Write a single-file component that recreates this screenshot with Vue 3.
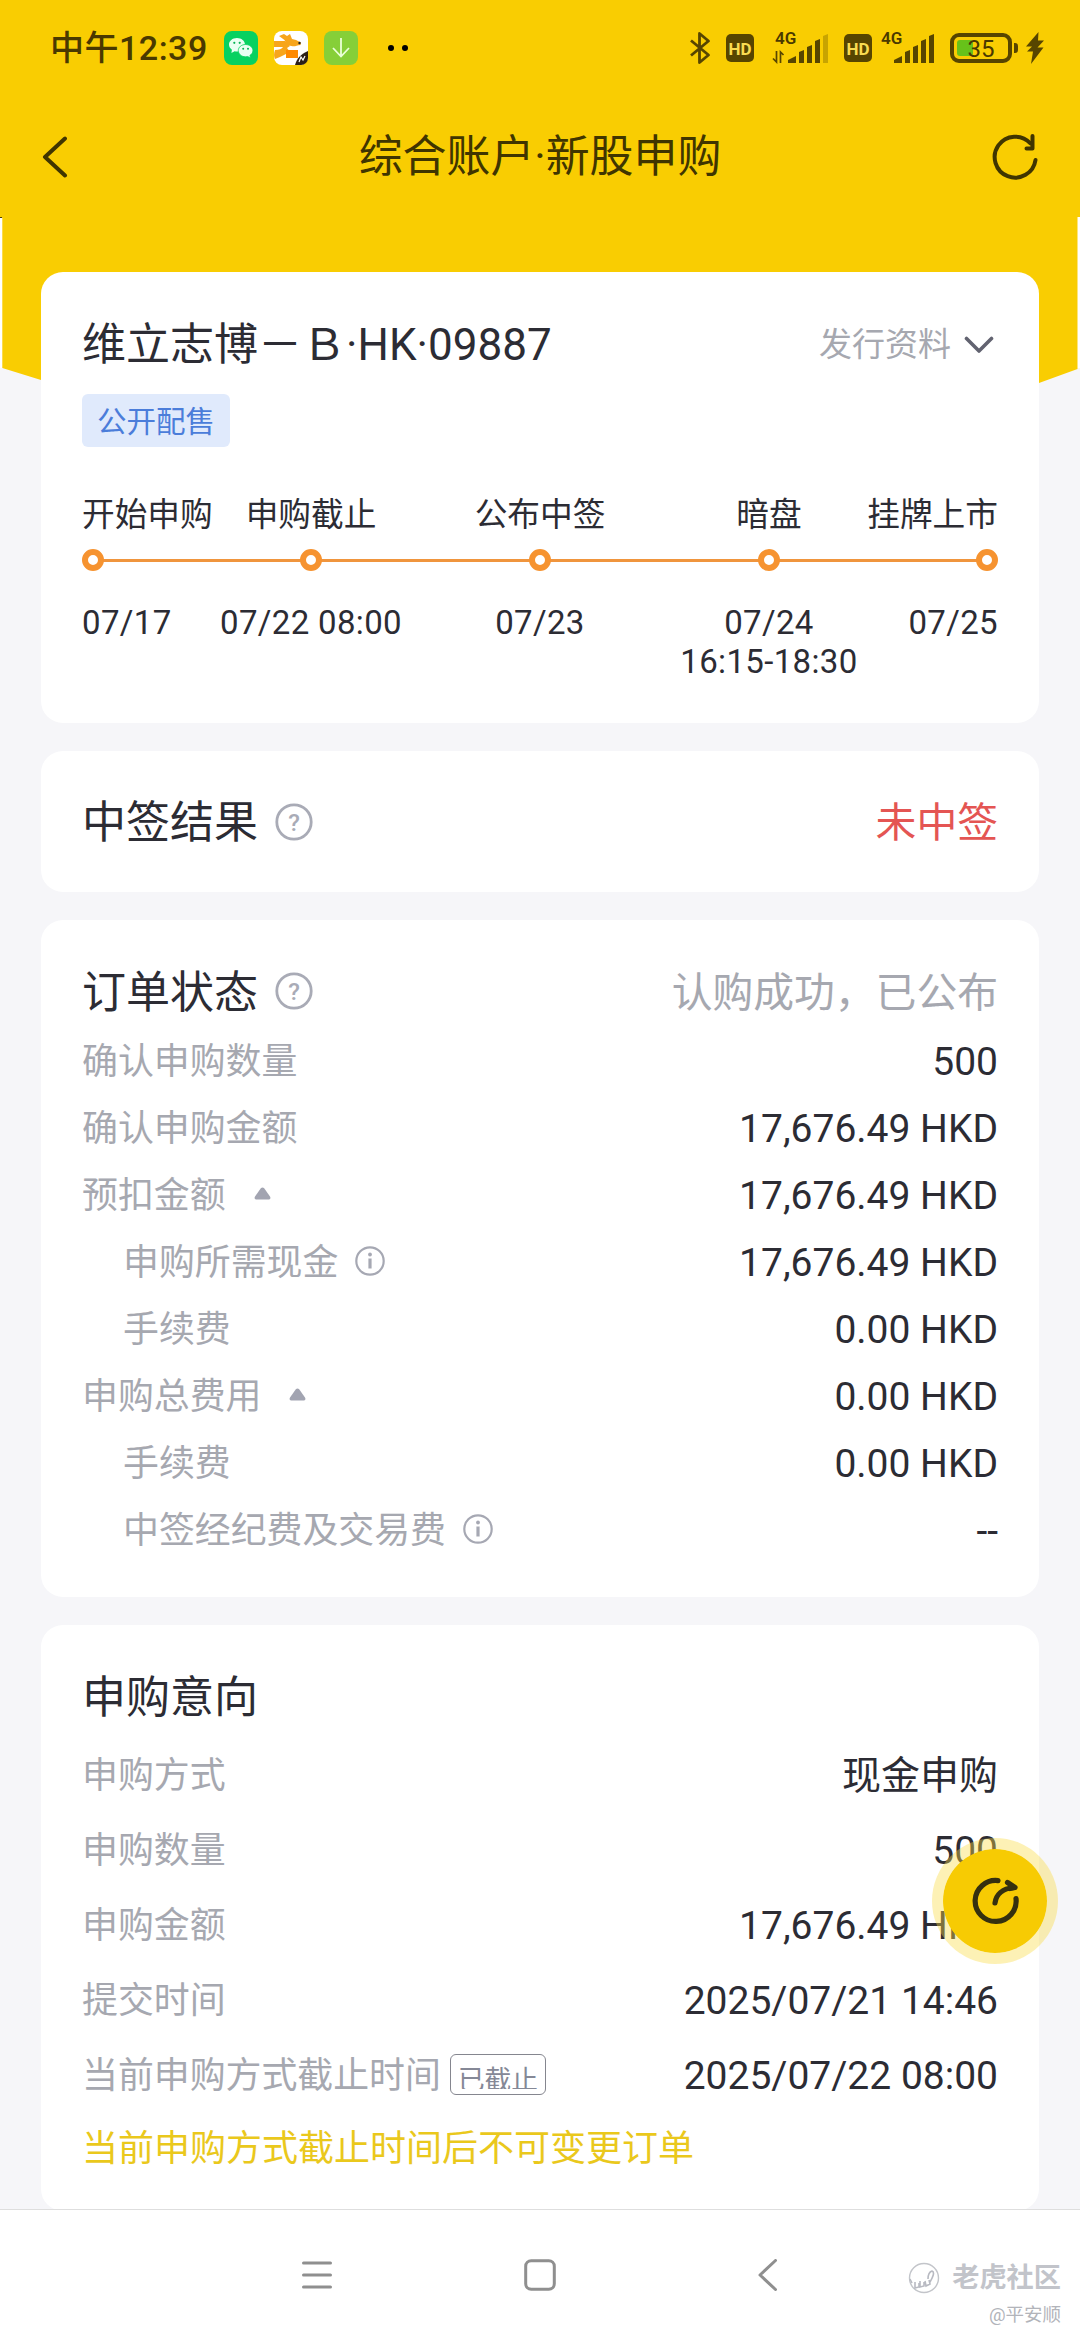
<template>
    <div class="page">
        <svg class="header-bg" width="1080" height="400" viewBox="0 0 1080 400">
            <rect x="0" y="216" width="1080" height="152" fill="#fff" />
            <path d="M0 0H1080V217H1077.500V369L1039 383L900 400H120L41 380L2.300 368V218H0z" fill="#f9cd02" />
            <rect x="0" y="217" width="2" height="1" fill="#4a3d00" />
        </svg>

        <div class="status-bar">
            <span class="time">中午12:39</span>
            <svg class="app-icon" viewBox="0 0 34 34">
                <rect width="34" height="34" rx="8" fill="#07d160" />
                <path d="M13 7c-4.600 0-8 2.900-8 6.600 0 2.100 1.100 3.900 2.900 5.100L7.400 22l3.200-1.700c.8.200 1.600.3 2.400.3 4.400 0 8-3 8-6.900S17.400 7 13 7z" fill="#e9fff2" />
                <path d="M21.500 13.500c-4 0-7.200 2.700-7.200 6.100s3.200 6.200 7.200 6.200c.8 0 1.500-.1 2.200-.3l2.800 1.500-.6-2.600c1.900-1.100 3-2.800 3-4.800 0-3.400-3.300-6.100-7.400-6.100z" fill="#e9fff2" stroke="#07d160" stroke-width=".8" />
                <g fill="#07b455">
                    <circle cx="10.300" cy="11.800" r="1.100" />
                    <circle cx="15.700" cy="11.800" r="1.100" />
                    <circle cx="19.200" cy="17.800" r="1" />
                    <circle cx="24" cy="17.800" r="1" />
                </g>
            </svg>
            <svg class="app-icon" viewBox="0 0 34 34">
                <rect width="34" height="34" rx="8" fill="#fff" />
                <path d="M5 5l5-2 3 2 3-2 2 5 4 1 5 2.500-.5 2.500c-4 .5-6 2-9 1-4-.5-5-2-7-6z" fill="#f7a51b" />
                <path d="M0 10h11l5 5-3 2 3 4-10 5-5 2c-1.500-3-1-6 0-9 4 0 7-1 8-3H0z" fill="#f7a51b" />
                <path d="M12 19h12v8H12z" fill="#ff8a00" />
                <circle cx="25.500" cy="12" r="1.200" fill="#222" />
                <path d="M34 20v7a7 7 0 0 1-7 7h-6c2-7 6-11 13-14z" fill="#2b1f18" />
                <path d="M25 31l2-5 2 3 2-4" stroke="#fff" stroke-width="1.200" fill="none" />
            </svg>
            <svg class="app-icon" viewBox="0 0 34 34">
                <rect width="34" height="34" rx="8" fill="#86cf38" />
                <path d="M17 7v18M9 17l8 8.500 8-8.500" stroke="#eaffd8" stroke-width="1.800" fill="none" />
            </svg>
            <div class="dots"><i></i><i></i></div>

            <div class="status-right">
                <svg class="bluetooth" width="22" height="34" viewBox="0 0 22 34">
                    <path d="M2 9.500L19.500 24 10.500 31.500V2.500L19.500 10 2 24.500" fill="none" stroke="#574500" stroke-width="2.800" stroke-linejoin="round" />
                </svg>
                <span class="hd">HD</span>
                <div v-for="(sim, i) in sims" :key="i" class="sim-wrap">
                    <div class="sim">
                        <span class="net">4G</span>
                        <svg width="58" height="32" viewBox="0 0 58 32">
                            <path v-if="sim.data" d="M5.500 19v11L2 26.500M9.500 31V20l3 3" fill="none" stroke="#574500" stroke-width="1.700" />
                            <g fill="#574500">
                                <path d="M17 31v-3l8-4v7z" />
                                <path d="M28 31V20l5-2v13z" />
                                <path d="M36 31V15l5-2v18z" />
                                <path d="M44 31V9l5-2v24z" />
                                <path d="M52 31V4l5-2v29z" :opacity="sim.full ? 1 : 0.3" />
                            </g>
                        </svg>
                    </div>
                    <span v-if="i === 0" class="hd">HD</span>
                </div>
                <div class="battery">
                    <div class="level"></div>
                    <span>35</span>
                </div>
                <div class="battery-tip"></div>
                <svg class="bolt" width="18" height="32" viewBox="0 0 18 32">
                    <path d="M12.500 0L0 14.500h6L1 19.500h6L5 32 17.500 15.500h-6L18 8.500h-6z" fill="#574500" />
                </svg>
            </div>
        </div>

        <div class="nav-bar">
            <svg width="26" height="42" viewBox="0 0 26 42">
                <path d="M23 2.500L3 21l20 18.500" fill="none" stroke="#403500" stroke-width="4" stroke-linecap="round" stroke-linejoin="round" />
            </svg>
            <h1>综合账户·新股申购</h1>
            <svg width="46" height="48" viewBox="0 0 46 48">
                <path d="M43.500 27A20.500 20.500 0 1 1 38.500 10.500" fill="none" stroke="#403500" stroke-width="4" stroke-linecap="round" />
                <path d="M40.500 3v12.500h-6" fill="none" stroke="#403500" stroke-width="4" stroke-linecap="round" stroke-linejoin="round" />
            </svg>
        </div>

        <section class="card stock">
            <div class="head">
                <h2>维立志博－Ｂ·HK·09887</h2>
                <div class="material">
                    发行资料
                    <svg width="30" height="18" viewBox="0 0 30 18">
                        <path d="M2.500 2.500L15 15 27.500 2.500" fill="none" stroke="#626370" stroke-width="3.600" stroke-linecap="round" stroke-linejoin="round" />
                    </svg>
                </div>
            </div>
            <span class="tag">公开配售</span>
            <div class="steps labels">
                <div v-for="s in steps" :key="s.label">{{ s.label }}</div>
            </div>
            <div class="steps points">
                <div v-for="s in steps" :key="s.label"><i></i></div>
            </div>
            <div class="steps dates">
                <div v-for="s in steps" :key="s.label">
                    <span>{{ s.date }}</span>
                    <span v-if="s.time">{{ s.time }}</span>
                </div>
            </div>
        </section>

        <section class="card result">
            <h2>中签结果</h2>
            <svg class="help" viewBox="0 0 38 38">
                <circle cx="19" cy="19" r="17.200" />
                <text x="19" y="27.500">?</text>
            </svg>
            <span class="status red">未中签</span>
        </section>

        <section class="card order">
            <div class="head">
                <h2>订单状态</h2>
                <svg class="help" viewBox="0 0 38 38">
                    <circle cx="19" cy="19" r="17.200" />
                    <text x="19" y="27.500">?</text>
                </svg>
                <span class="status">认购成功，已公布</span>
            </div>
            <div v-for="(row, i) in orderRows" :key="i" class="row" :class="{ sub: row.sub }">
                <span class="label">{{ row.label }}</span>
                <svg v-if="row.fold" class="fold" width="17" height="13" viewBox="0 0 17 13">
                    <path d="M7 1Q8.500-.2 10 1l6 8.500q1.200 2.500-1 3H2Q-.2 12 1 9.500z" fill="#a2a4b1" />
                </svg>
                <svg v-if="row.info" class="info" width="30" height="30" viewBox="0 0 30 30">
                    <circle cx="15" cy="15" r="13.700" fill="none" stroke="#a6a8b3" stroke-width="2.200" />
                    <circle cx="15" cy="8.500" r="1.900" fill="#a6a8b3" />
                    <path d="M15 12.500v10" stroke="#a6a8b3" stroke-width="3.200" />
                </svg>
                <span class="value">{{ row.value }}</span>
            </div>
        </section>

        <section class="card intent">
            <div class="head"><h2>申购意向</h2></div>
            <div v-for="row in intentRows" :key="row.label" class="row">
                <span class="label">{{ row.label }}</span>
                <span v-if="row.badge" class="badge"><em>{{ row.badge }}</em></span>
                <span class="value">{{ row.value }}</span>
            </div>
            <p class="notice">当前申购方式截止时间后不可变更订单</p>
        </section>

        <div class="fab">
            <svg width="50" height="50" viewBox="0 0 50 50">
                <g fill="none" stroke="#35300f" stroke-width="5.200" stroke-linecap="round" stroke-linejoin="round">
                    <path d="M28 4.600A20.500 20.500 0 1 0 46 22.500" />
                    <path d="M25 27c1-8 7-14.500 19-15.500" />
                    <path d="M37.500 6.500l7.500 5-5 1" />
                </g>
            </svg>
        </div>

        <div class="bottom-nav">
            <svg class="menu" width="32" height="32" viewBox="0 0 32 32">
                <path d="M2.500 4h27M2.500 16h27M2.500 28h27" />
            </svg>
            <svg width="32" height="32" viewBox="0 0 32 32">
                <rect x="1.700" y="1.700" width="28.600" height="28.600" rx="5.500" />
            </svg>
            <svg width="32" height="32" viewBox="0 0 32 32">
                <path d="M23.500 1.500L8 16 23.500 30.500" />
            </svg>
        </div>

        <div class="watermark">
            <div class="brand">
                <svg width="32" height="32" viewBox="0 0 32 32">
                    <circle cx="16" cy="16" r="14.500" fill="none" stroke="#c3c5ca" stroke-width="1.400" />
                    <path d="M2 17l2 4M7 20v6l4-1v-4M12 19v6l4-1v-4M17 19l1 5 4-2-1-4M20 17c0-3 1-7 4-8 3 1 1 6-2 11" fill="none" stroke="#b8bac2" stroke-width="1.600" />
                </svg>
                <b>老虎社区</b>
            </div>
            <span>@平安顺</span>
        </div>
    </div>
</template>

<script setup>
const sims = [
    { data: true, full: false },
    { data: false, full: true },
]

const steps = [
    { label: '开始申购', date: '07/17' },
    { label: '申购截止', date: '07/22 08:00' },
    { label: '公布中签', date: '07/23' },
    { label: '暗盘', date: '07/24', time: '16:15-18:30' },
    { label: '挂牌上市', date: '07/25' },
]

const orderRows = [
    { label: '确认申购数量', value: '500' },
    { label: '确认申购金额', value: '17,676.49 HKD' },
    { label: '预扣金额', value: '17,676.49 HKD', fold: true },
    { label: '申购所需现金', value: '17,676.49 HKD', sub: true, info: true },
    { label: '手续费', value: '0.00 HKD', sub: true },
    { label: '申购总费用', value: '0.00 HKD', fold: true },
    { label: '手续费', value: '0.00 HKD', sub: true },
    { label: '中签经纪费及交易费', value: '--', sub: true, info: true },
]

const intentRows = [
    { label: '申购方式', value: '现金申购' },
    { label: '申购数量', value: '500' },
    { label: '申购金额', value: '17,676.49 HKD' },
    { label: '提交时间', value: '2025/07/21 14:46' },
    { label: '当前申购方式截止时间', value: '2025/07/22 08:00', badge: '已截止' },
]
</script>

<style>
body {
    margin: 0;
    background: #f6f6f9;
}
</style>

<style scoped>
.page {
    position: relative;
    display: flex;
    flex-direction: column;
    width: 1080px;
    height: 2340px;
    overflow: hidden;
    background: #f6f6f9;
    color: #2c2c34;
    font-family: Roboto, "Noto Sans CJK SC", sans-serif;
    isolation: isolate;
}

.header-bg {
    position: absolute;
    top: 0;
    left: 0;
    z-index: -1;
}

h1,
h2,
p {
    margin: 0;
    font-weight: 400;
}

.status-bar {
    display: flex;
    align-items: center;
    height: 96px;
    padding: 0 36px 0 50px;
    box-sizing: border-box;
    color: #4a3900;
}

.time {
    width: 174px;
    font-size: 34px;
    font-weight: 500;
    letter-spacing: 0.500px;
    line-height: 40px;
    white-space: nowrap;
}

.app-icon {
    width: 34px;
    height: 34px;
    margin-right: 16px;
}

.dots {
    display: flex;
    gap: 8px;
    margin-left: 14px;
}

.dots i {
    width: 6px;
    height: 6px;
    border-radius: 50%;
    background: #000;
}

.status-right {
    display: flex;
    align-items: center;
    margin-left: auto;
}

.bluetooth {
    margin-right: 15px;
}

.hd {
    width: 28px;
    height: 28px;
    border-radius: 5px;
    background: #574500;
    color: #f9dc50;
    font-size: 17px;
    font-weight: 700;
    line-height: 30px;
    text-align: center;
}

.sim-wrap {
    display: flex;
    align-items: center;
}

.sim {
    position: relative;
    display: flex;
    width: 58px;
    height: 32px;
    margin: 0 15px 0 17px;
}

.sim-wrap + .sim-wrap .sim {
    margin: 0 15px 0 5px;
}

.net {
    position: absolute;
    top: -2px;
    left: 4px;
    font-size: 17px;
    font-weight: 600;
    line-height: 16px;
}

.battery {
    position: relative;
    width: 62px;
    height: 30px;
    border: 4px solid #574500;
    border-radius: 9px;
    box-sizing: border-box;
    font-size: 24px;
    line-height: 24px;
    text-align: center;
}

.battery span {
    position: relative;
}

.level {
    position: absolute;
    top: 3px;
    left: 3px;
    width: 16px;
    height: 16px;
    border-radius: 3px;
    background: #67c21a;
}

.battery-tip {
    width: 4px;
    height: 10px;
    margin: 0 8px 0 2px;
    border-radius: 0 3px 3px 0;
    background: #574500;
}

.nav-bar {
    display: flex;
    align-items: center;
    justify-content: space-between;
    height: 122px;
    padding: 0 42px;
    color: #403500;
}

.nav-bar h1 {
    padding-left: 20px;
    font-size: 43.900px;
    line-height: 60px;
}

.card {
    margin: 0 41px 28px;
    padding: 0 41px;
    box-sizing: border-box;
    border-radius: 22px;
    background: #fff;
    flex-shrink: 0;
}

.card h2 {
    font-size: 44px;
    line-height: 60px;
    white-space: nowrap;
}

.head {
    display: flex;
    align-items: center;
}

.stock {
    height: 451px;
    margin-top: 54px;
    padding-top: 40px;
}

.stock .head {
    justify-content: space-between;
    height: 66px;
}

.material {
    display: flex;
    align-items: center;
    gap: 13px;
    margin-right: 4px;
    color: #a6a8b0;
    font-size: 33px;
    line-height: 46px;
}

.tag {
    display: block;
    width: 148px;
    height: 53px;
    margin-top: 16px;
    border-radius: 6px;
    background: #e0eafc;
    color: #4b7dda;
    font-size: 29.500px;
    line-height: 56px;
    text-align: center;
}

.steps {
    display: grid;
    grid-template-columns: minmax(0, 1fr) repeat(3, minmax(0, 2fr)) minmax(0, 1fr);
    white-space: nowrap;
}

.steps div {
    display: flex;
    flex-direction: column;
    align-items: center;
}

.steps div:first-child {
    align-items: flex-start;
}

.steps div:last-child {
    align-items: flex-end;
}

.labels {
    margin-top: 43px;
    font-size: 32.700px;
    line-height: 50px;
}

/* labels are wider than the half-width edge columns */
.labels div:first-child {
    display: block;
}

.labels div:last-child {
    display: flex;
}

.points {
    height: 22px;
    margin-top: 9px;
    background: linear-gradient(#f0953d, #f0953d) center / 894px 3px no-repeat;
}

.points i {
    width: 22px;
    height: 22px;
    border: 6px solid #f69330;
    border-radius: 50%;
    box-sizing: border-box;
    background: #fff;
}

.dates {
    margin-top: 32px;
    font-size: 33px;
    letter-spacing: 0.350px;
    line-height: 39px;
}

.result {
    display: flex;
    align-items: center;
    height: 141px;
    padding-top: 3px;
}

.help {
    width: 38px;
    height: 38px;
    margin: -3px 0 0 17px;
}

.help circle {
    fill: none;
    stroke: #a9abb6;
    stroke-width: 2.800;
}

.help text {
    fill: #a9abb6;
    font-size: 24px;
    font-weight: 500;
    text-anchor: middle;
}

.status {
    margin-left: auto;
    color: #a6a8b0;
    font-size: 40.800px;
    line-height: 58px;
}

.red {
    color: #e45553;
}

.order {
    height: 677px;
    padding-top: 38px;
}

.order .head {
    height: 70px;
}

.order .help {
    margin-top: -5px;
}

.row {
    display: flex;
    align-items: center;
    height: 67px;
}

.sub {
    padding-left: 41px;
}

.label {
    color: #a6a8b0;
    font-size: 35.900px;
    line-height: 50px;
    white-space: nowrap;
}

.value {
    margin-left: auto;
    font-size: 39px;
    line-height: 54px;
    white-space: nowrap;
}

.fold {
    margin: -4px 0 0 28px;
}

.info {
    margin: -3px 0 0 17px;
}

.intent {
    height: 586px;
    margin-bottom: 0;
    padding-top: 33px;
}

.intent .head {
    height: 80px;
}

.intent .row {
    height: 75px;
}

.badge {
    height: 41px;
    margin: -3px 0 0 9px;
    padding: 0 7px;
    border: 1px solid #85868f;
    border-radius: 6px;
    box-sizing: border-box;
}

.badge em {
    display: block;
    height: 34px;
    overflow: hidden;
    color: #858896;
    font-size: 26.700px;
    font-style: normal;
    line-height: 51px;
}

.notice {
    color: #eac81c;
    font-size: 36px;
    line-height: 72px;
}

.fab {
    position: absolute;
    top: 1838px;
    left: 932px;
    display: flex;
    align-items: center;
    justify-content: center;
    width: 126px;
    height: 126px;
    border: 11px solid rgba(250, 220, 70, 0.4);
    border-radius: 50%;
    box-sizing: border-box;
    background: #f7cb03;
    background-clip: padding-box;
}

.bottom-nav {
    position: absolute;
    right: 0;
    bottom: 0;
    left: 0;
    display: flex;
    justify-content: center;
    gap: 196px;
    height: 131px;
    padding-top: 49px;
    border-top: 1px solid #dedede;
    box-sizing: border-box;
    background: #fff;
}

.bottom-nav svg {
    fill: none;
    stroke: #8f8f8f;
    stroke-width: 3;
    stroke-linecap: round;
    stroke-linejoin: round;
}

.bottom-nav .menu {
    margin: 0 -5px 0 5px;
}

.watermark {
    position: absolute;
    right: 19px;
    bottom: 13px;
    display: flex;
    flex-direction: column;
    align-items: flex-end;
    color: #b2b4ba;
}

.brand {
    display: flex;
    align-items: center;
    gap: 12px;
    font-size: 27.200px;
    line-height: 34px;
}

.brand b {
    color: #c2c4ca;
}

.watermark span {
    margin-top: 8px;
    font-size: 18.500px;
    line-height: 24px;
}
</style>
